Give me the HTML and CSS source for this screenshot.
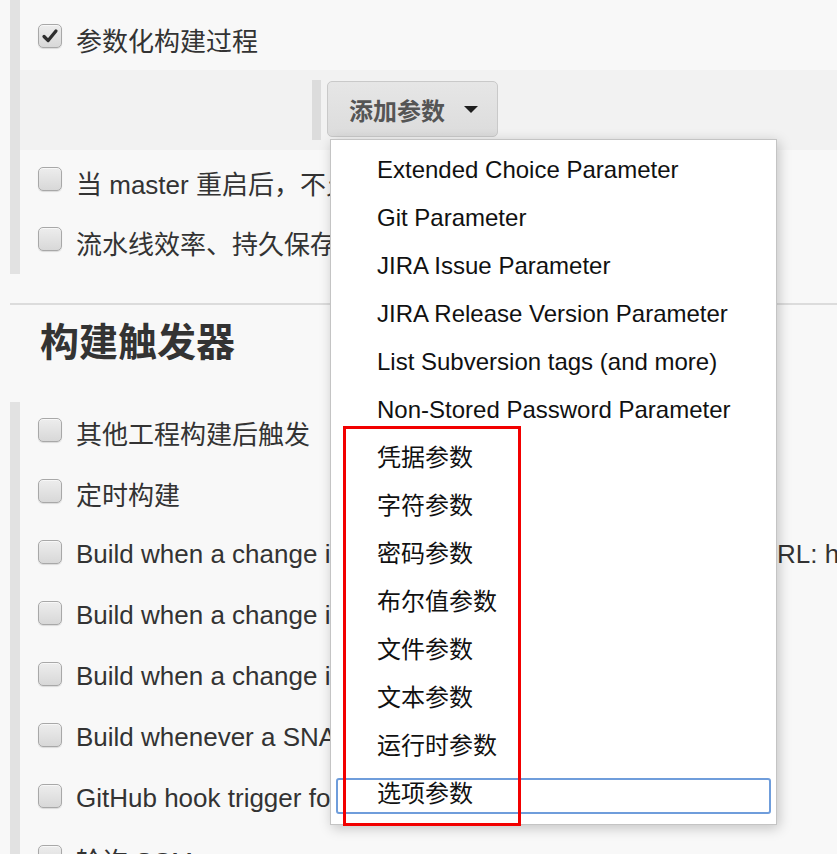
FILE: index.html
```html
<!DOCTYPE html>
<html lang="zh-CN">
<head>
<meta charset="utf-8">
<title>参数化构建过程</title>
<link rel="stylesheet" href="styles.css">
</head>
<body>
<div class="page">
  <div class="group group-top">
    <div class="row row-first">
      <span class="cb cb-checked"><svg viewBox="0 0 24 24" width="22" height="22"><path d="M5.5 12.5 L10 17 L18.5 6.5" fill="none" stroke="#2e2e2e" stroke-width="3.6" stroke-linecap="round" stroke-linejoin="round"/></svg></span>
      <span class="label">参数化构建过程</span>
    </div>
    <div class="band">
      <span class="band-bar"></span>
      <div class="dd">
        <button class="btn" type="button">添加参数<span class="caret"></span></button>
        <ul class="menu">
          <li class="item">Extended Choice Parameter</li>
          <li class="item">Git Parameter</li>
          <li class="item">JIRA Issue Parameter</li>
          <li class="item">JIRA Release Version Parameter</li>
          <li class="item">List Subversion tags (and more)</li>
          <li class="item">Non-Stored Password Parameter</li>
          <li class="item">凭据参数</li>
          <li class="item">字符参数</li>
          <li class="item">密码参数</li>
          <li class="item">布尔值参数</li>
          <li class="item">文件参数</li>
          <li class="item">文本参数</li>
          <li class="item">运行时参数</li>
          <li class="item item-focus">选项参数</li>
        </ul>
        <span class="annot"></span>
      </div>
    </div>
    <div class="row"><span class="cb"></span><span class="label">当 master 重启后，不允许恢复流水线</span></div>
    <div class="row"><span class="cb"></span><span class="label">流水线效率、持久保存设置覆盖</span></div>
  </div>

  <hr class="sep">
  <h2 class="heading">构建触发器</h2>

  <div class="group group-triggers">
    <div class="row row-t"><span class="cb"></span><span class="label">其他工程构建后触发</span></div>
    <div class="row row-t"><span class="cb"></span><span class="label">定时构建</span></div>
    <div class="row row-t"><span class="cb"></span><span class="label">Build when a change is pushed to GitLab. GitLab webhook URL: http://localhost:8080/project/demo</span></div>
    <div class="row row-t"><span class="cb"></span><span class="label">Build when a change is pushed to BitBucket</span></div>
    <div class="row row-t"><span class="cb"></span><span class="label">Build when a change is pushed to Gitee</span></div>
    <div class="row row-t"><span class="cb"></span><span class="label">Build whenever a SNAPSHOT dependency is built</span></div>
    <div class="row row-t"><span class="cb"></span><span class="label">GitHub hook trigger for GITScm polling</span></div>
    <div class="row row-t"><span class="cb"></span><span class="label">轮询 SCM</span></div>
  </div>
</div>
</body>
</html>
```

FILE: styles.css
```css
html, body {
  margin: 0;
  padding: 0;
  height: 100%;
  overflow: hidden;
}

body {
  background: #f8f8f8;
  color: #333;
  font-family: "Liberation Sans", Arial, "Noto Sans CJK SC", sans-serif;
}

.page {
  width: 837px;
  height: 854px;
  overflow: hidden;
}

.group {
  margin-left: 10px;
  border-left: 10px solid #e2e2e2;
}

.group-top {
  padding-top: 12px;
}

.row {
  box-sizing: border-box;
  display: flex;
  align-items: center;
  height: 60px;
  padding-left: 18px;
  padding-bottom: 4px;
  white-space: nowrap;
  font-size: 26px;
}

.row-first {
  height: 58px;
}

.row-t {
  height: 61px;
}

.group-triggers {
  padding-top: 2px;
}

.label {
  color: #333;
  white-space: nowrap;
}

.cb {
  flex: none;
  box-sizing: border-box;
  width: 24px;
  height: 24px;
  margin-right: 14px;
  margin-bottom: 6px;
  border: 1px solid #a8a8a8;
  border-radius: 5px;
  background: linear-gradient(#ededed, #d8d8d8);
  box-shadow: 0 1px 1px rgba(0, 0, 0, 0.12), inset 0 1px 0 rgba(255, 255, 255, 0.6);
  display: flex;
  align-items: center;
  justify-content: center;
}

.cb svg {
  display: block;
}

.band {
  height: 80px;
  margin-bottom: 4px;
  box-sizing: border-box;
  padding: 10px 0 0 292px;
  background: #f2f2f2;
  display: flex;
  align-items: flex-start;
  gap: 6px;
}

.band-bar {
  width: 9px;
  height: 60px;
  background: #dcdcdc;
  flex: none;
}

.dd {
  position: relative;
  margin-top: 1px;
}

.btn {
  box-sizing: border-box;
  height: 56px;
  display: flex;
  align-items: center;
  padding: 0 19px 0 21px;
  border: 1px solid #c9c9c9;
  border-radius: 5px;
  background: linear-gradient(#e6e6e6, #dcdcdc);
  color: #555;
  font-family: "Liberation Sans", Arial, "Noto Sans CJK SC", sans-serif;
  font-size: 24px;
  font-weight: bold;
  cursor: pointer;
}

.caret {
  display: inline-block;
  width: 0;
  height: 0;
  margin-left: 19px;
  border-top: 7px solid #1e1e1e;
  border-left: 7px solid transparent;
  border-right: 7px solid transparent;
}

.menu {
  position: absolute;
  z-index: 10;
  left: 3px;
  top: 58px;
  box-sizing: border-box;
  width: 447px;
  margin: 0;
  padding: 6px 0 6px;
  list-style: none;
  background: #fff;
  border: 1px solid #c4c4c4;
  box-shadow: 2px 3px 12px rgba(0, 0, 0, 0.22);
}

.item {
  position: relative;
  height: 48px;
  line-height: 48px;
  padding-left: 46px;
  font-size: 24px;
  color: #111;
  white-space: nowrap;
}

.item-focus::after {
  content: "";
  position: absolute;
  left: 5px;
  right: 5px;
  top: 8px;
  bottom: 4px;
  border: 2px solid #6f9ddb;
  border-radius: 3px;
}

.annot {
  position: absolute;
  z-index: 11;
  left: 16px;
  top: 345px;
  width: 178px;
  height: 400px;
  box-sizing: border-box;
  border: 3px solid #f20000;
  pointer-events: none;
}

.sep {
  margin: 29px 0 0 10px;
  border: 0;
  border-top: 2px solid #dcdcdc;
  height: 0;
}

.heading {
  margin: 18px 0 39px 40px;
  font-size: 39px;
  line-height: 40px;
  font-weight: bold;
  color: #333;
}
```
